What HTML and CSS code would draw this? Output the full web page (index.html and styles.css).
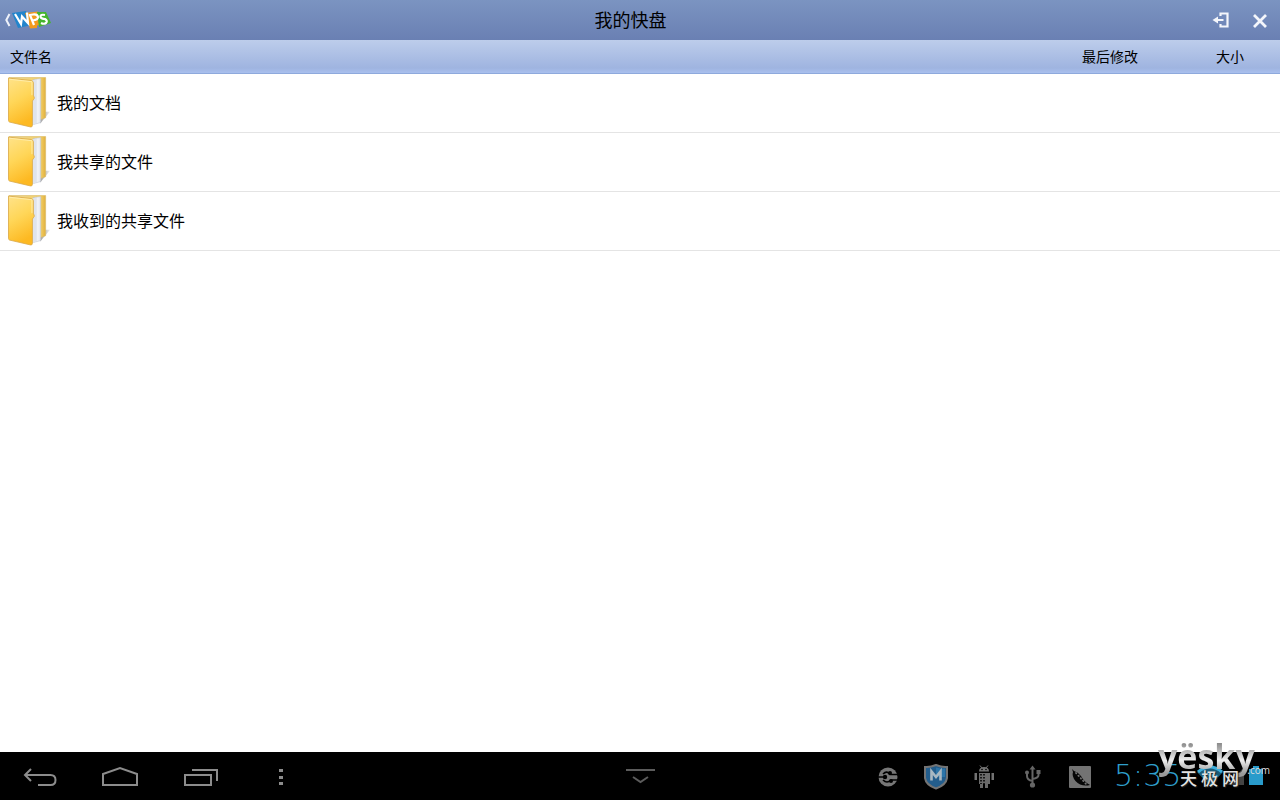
FILE: index.html
```html
<!DOCTYPE html>
<html lang="zh-CN">
<head>
<meta charset="utf-8">
<title>我的快盘</title>
<link rel="stylesheet" href="styles.css">
</head>
<body>
<svg class="defs" aria-hidden="true">
  <defs>
    <linearGradient id="front" x1="0" y1="0" x2="0.3" y2="1">
      <stop offset="0" stop-color="#ffe38a"/><stop offset="0.5" stop-color="#ffd658"/><stop offset="1" stop-color="#fdb922"/>
    </linearGradient>
    <linearGradient id="rear" x1="0" y1="0" x2="1" y2="0">
      <stop offset="0" stop-color="#ecd9a0"/><stop offset="0.85" stop-color="#f5d268"/><stop offset="1" stop-color="#e0b040"/>
    </linearGradient>
    <linearGradient id="paper" x1="0" y1="0" x2="1" y2="0">
      <stop offset="0" stop-color="#c9ced8"/><stop offset="0.6" stop-color="#f2f4f8"/><stop offset="1" stop-color="#dde2ea"/>
    </linearGradient>
    <linearGradient id="shade" x1="0" y1="0" x2="1" y2="0">
      <stop offset="0" stop-color="#999"/><stop offset="1" stop-color="#eee"/>
    </linearGradient>
    <symbol id="folder" viewBox="0 0 44 54">
      <path d="M33 48L43 36L37 36L32 44z" fill="url(#shade)"/>
      <path d="M1 1H38.500V42L33 44L1 44z" fill="url(#rear)" stroke="#dcbc68" stroke-width="0.7"/>
      <path d="M26 3L33.500 2V47L26 49z" fill="url(#paper)" stroke="#b9bec8" stroke-width="0.5"/>
      <path d="M24 4L29 3V48L24 50z" fill="#dfe4ec"/>
      <path d="M0.500 1.500L24 4Q26 4.500 26 6.500V19L27 22L25 25V49.500Q25 52 23 51.500L1.500 46.500Q0.500 46 0.500 45z" fill="url(#front)" stroke="#d9a848" stroke-width="0.8"/>
      <path d="M1.500 2.700L24.500 5.200V19" fill="none" stroke="#fff1b8" stroke-width="0.8"/>
    </symbol>
  </defs>
</svg>
<div class="screen">
  <header class="titlebar">
    <button class="back" type="button" aria-label="返回 WPS">
      <svg class="logo" viewBox="0 0 48 22" aria-hidden="true">
        <path d="M6.500 5L3.300 11L6.500 17" fill="none" stroke="#eef2fa" stroke-width="2"/>
        <path d="M9 4L23 2L29 16L15 19z" fill="#2385cc"/>
        <path d="M22 4L35 2.500L41 15L34 16.500L34 19L27 19.500z" fill="#f39a1c"/>
        <path d="M34 3L43 3L48 14L36 18z" fill="#45b52e"/>
        <path d="M12 5L18 15L19 7.500L25 14L24 3.500" fill="none" stroke="#fff" stroke-width="2.200"/>
        <path d="M31 16L27 6L30 5.500Q34.500 5 35 8Q35 11 29.500 11.500" fill="none" stroke="#fff" stroke-width="2.200"/>
        <path d="M42 6Q37 5 37.500 8Q38.500 10 42 10Q45 12 43 14Q41 15.500 38 14" fill="none" stroke="#fff" stroke-width="2.200"/>
      </svg>
    </button>
    <h1 class="title">我的快盘</h1>
    <button class="action" type="button" aria-label="退出登录">
      <svg viewBox="0 0 20 20" width="20" height="20" aria-hidden="true">
        <path d="M8.500 6V3.500H15.500V16.500H8.500V14" fill="none" stroke="#f4f6fb" stroke-width="2.200"/>
        <path d="M11.500 10H4" stroke="#f4f6fb" stroke-width="2"/><path d="M0.500 10L6 6.500V13.500z" fill="#f4f6fb"/>
      </svg>
    </button>
    <button class="action" type="button" aria-label="关闭">
      <svg viewBox="0 0 20 20" width="20" height="20" aria-hidden="true">
        <path d="M3 5L15 17M15 5L3 17" stroke="#f4f6fb" stroke-width="2.800"/>
      </svg>
    </button>
  </header>
  <main class="content">
    <table class="files">
      <thead>
        <tr><th class="name" scope="col">文件名</th><th class="modified" scope="col">最后修改</th><th class="size" scope="col">大小</th></tr>
      </thead>
      <tbody>
        <tr><td><div class="file"><svg class="folder" aria-hidden="true"><use href="#folder"/></svg><span>我的文档</span></div></td><td></td><td></td></tr>
        <tr><td><div class="file"><svg class="folder" aria-hidden="true"><use href="#folder"/></svg><span>我共享的文件</span></div></td><td></td><td></td></tr>
        <tr><td><div class="file"><svg class="folder" aria-hidden="true"><use href="#folder"/></svg><span>我收到的共享文件</span></div></td><td></td><td></td></tr>
      </tbody>
    </table>
  </main>
  <footer class="system">
    <nav class="keys">
      <button class="key" type="button" aria-label="返回">
        <svg viewBox="0 0 40 24" width="40" height="24" aria-hidden="true"><path d="M11 5L5 11L11 17M5 11H30.500Q35.500 11 35.500 16Q35.500 21 30.500 21H18" fill="none" stroke="#8c8c8c" stroke-width="2"/></svg>
      </button>
      <button class="key" type="button" aria-label="主屏幕">
        <svg viewBox="0 0 40 24" width="40" height="24" aria-hidden="true"><path d="M3 21V10L20 4L37 10V21z" fill="none" stroke="#8c8c8c" stroke-width="2"/></svg>
      </button>
      <button class="key" type="button" aria-label="最近任务">
        <svg viewBox="0 0 40 24" width="40" height="24" aria-hidden="true"><path d="M5 11H31V21H5zM12 6H37V17" fill="none" stroke="#8c8c8c" stroke-width="2"/></svg>
      </button>
      <button class="key" type="button" aria-label="菜单">
        <svg viewBox="0 0 40 24" width="40" height="24" aria-hidden="true"><path d="M19 5h4v3h-4zM19 12h4v3h-4zM19 18h4v3h-4z" fill="#8c8c8c"/></svg>
      </button>
    </nav>
    <button class="hide" type="button" aria-label="隐藏">
      <svg viewBox="0 0 40 24" width="40" height="24" aria-hidden="true"><path d="M6 6H35M13 13L20.500 18L28 13" fill="none" stroke="#5c5c5c" stroke-width="2"/></svg>
    </button>
    <div class="status">
      <svg class="notice" viewBox="0 0 28 28" aria-hidden="true">
        <circle cx="14" cy="15" r="9.500" fill="#777"/>
        <path d="M25 12.500H16Q13 8 9 12M25 18H17Q13 22 9 18" fill="none" stroke="#000" stroke-width="1.600"/>
        <circle cx="16" cy="11" r="2" fill="#000"/><circle cx="17" cy="19" r="2" fill="#000"/>
        <path d="M3 15H10" stroke="#000" stroke-width="1.500"/><circle cx="11" cy="15" r="2.200" fill="#000"/>
      </svg>
      <svg class="notice" viewBox="0 0 28 28" aria-hidden="true">
        <path d="M14 3Q20 5.500 25 5V16Q24 23 14 26.500Q4 23 3 16V5Q8 5.500 14 3z" fill="#235d8c" stroke="#747474" stroke-width="2"/>
        <path d="M14 5.500Q19 7 23 6.500V15H14z" fill="#2d75a8"/>
        <path d="M9.500 18.500V9.500L14 15L18.500 9.500V18.500" fill="none" stroke="#a9b8c2" stroke-width="2.600"/>
      </svg>
      <svg class="notice" viewBox="0 0 28 28" aria-hidden="true">
        <path d="M9 9.500Q9 5 14 5Q19 5 19 9.500z" fill="#727272"/><path d="M10 3.500L12 6M18 3.500L16 6" stroke="#727272"/>
        <circle cx="12" cy="7.500" r="0.800" fill="#000"/><circle cx="16" cy="7.500" r="0.800" fill="#000"/>
        <path d="M9 11H20V22H18V26H15V22H13V26H10V22H9z" fill="#6b6b6b"/>
        <path d="M4.500 11H7v7H4.500zM21.500 11H24v7h-2.500z" fill="#727272"/>
        <path d="M11 12V22M14 12V22" stroke="#111" stroke-width="1.800" stroke-dasharray="1.500 1.500"/>
      </svg>
      <svg class="notice" viewBox="0 0 28 28" aria-hidden="true">
        <path d="M14.500 23V6M14.500 19Q9 18 9 14V11M14.500 17Q20.500 16 20.500 13V10" fill="none" stroke="#666" stroke-width="2"/>
        <path d="M14.500 3.500L17.500 7.500H11.500z" fill="#666"/><circle cx="14.500" cy="23" r="2.600" fill="#666"/><circle cx="9" cy="10.500" r="2" fill="#666"/><path d="M18.500 8h4v4h-4z" fill="#666"/>
      </svg>
      <svg class="notice" viewBox="0 0 28 28" aria-hidden="true">
        <rect x="3" y="4" width="22" height="22" rx="1" fill="#737373"/>
        <path d="M6 7L8 9Q12 10 15 14Q18 20 24 23Q15 25 9.500 19Q5.500 14 7 10z" fill="#050505"/>
        <path d="M10 11L20 22" stroke="#737373" stroke-width="1.800" stroke-linecap="round" stroke-dasharray="0.500 3"/>
      </svg>
      <time class="clock" datetime="05:35">5:35</time>
      <svg class="wifi" viewBox="0 0 28 24" aria-hidden="true">
        <path d="M1 8Q14 -3 27 8L14 22z" fill="#1c5c78"/><path d="M2 8Q14 -2 26 8" fill="none" stroke="#3caedb" stroke-width="3"/><path d="M7 13Q14 7 21 13" fill="none" stroke="#3caedb" stroke-width="3"/>
      </svg>
      <svg class="signal" viewBox="0 0 16 20" aria-hidden="true"><path d="M0 19L16 1V19z" fill="#444"/></svg>
      <svg class="battery" viewBox="0 0 14 22" aria-hidden="true"><path d="M0 4H4V1H10V4H14V20H0z" fill="#299bcb"/></svg>
    </div>
    <div class="watermark">
      <div class="brand">yësky</div>
      <div class="caption"><span>天</span><span>极</span><span>网</span></div>
      <div class="domain">.com</div>
    </div>
  </footer>
</div>
</body>
</html>
```
FILE: styles.css
```css
* { box-sizing: border-box; }
body {
  margin: 0;
  background: #fff;
  color: #000;
  font-family: "Noto Sans CJK SC", "Noto Sans", sans-serif;
}
button { padding: 0; border: 0; background: none; cursor: pointer; }
svg { display: block; }
.defs { position: absolute; width: 0; height: 0; }
.screen { display: flex; flex-direction: column; min-height: 100vh; }
.titlebar {
  display: flex;
  align-items: center;
  height: 40px;
  background: linear-gradient(#7b94c1, #6a80b3);
}
.back { width: 59px; padding-left: 3px; }
.logo { width: 48px; height: 22px; }
.title { flex: 1; margin: 0; padding-bottom: 2px; font-size: 18px; font-weight: 400; line-height: 38px; text-align: center; }
.action { display: flex; justify-content: center; width: 39px; }
.content { flex: 1; }
.files { width: 100%; border-collapse: separate; border-spacing: 0; table-layout: fixed; }
.files th {
  height: 34px;
  padding: 0 0 2px;
  border-bottom: 1px solid #8ea9dc;
  background: linear-gradient(#bdcdeb, #9fb4e0 85%, #a9c0ee);
  font-size: 14px;
  font-weight: 400;
  line-height: 20px;
}
.files .name { padding-left: 10px; text-align: left; }
.modified { width: 140px; }
.size { width: 100px; }
.files td { height: 59px; padding: 0; border-bottom: 1px solid #e4e4e4; }
.file { display: flex; align-items: center; gap: 6px; padding-left: 8px; font-size: 16px; line-height: 24px; }
.file span { padding-bottom: 3px; }
.folder { width: 43px; height: 54px; }
.system {
  position: relative;
  display: flex;
  align-items: center;
  height: 48px;
  background: #000;
}
.keys { display: flex; flex: 1; }
.key { display: flex; justify-content: center; width: 80px; }
.status { display: flex; flex: 1; align-items: center; justify-content: flex-end; }
.notice { flex: none; width: 28px; height: 28px; margin-right: 20px; }
.clock {
  flex: none;
  width: 82px;
  color: #2f9fcc;
  font-family: "DejaVu Sans", sans-serif;
  font-size: 30px;
  font-weight: 200;
  line-height: 48px;
}
.wifi { flex: none; width: 28px; height: 24px; margin-right: 4px; }
.signal { flex: none; width: 16px; height: 20px; margin-right: 5px; }
.battery { flex: none; width: 14px; height: 22px; margin-right: 17px; }
.watermark { position: absolute; right: 10px; bottom: 10px; width: 112px; height: 56px; }
.brand {
  font-family: "Open Sans", sans-serif;
  font-size: 34px;
  font-weight: 700;
  line-height: 44px;
  color: transparent;
  background: linear-gradient(#888 20%, #eee 60%, #999 90%);
  -webkit-background-clip: text;
  background-clip: text;
}
.caption {
  position: absolute;
  bottom: 0;
  left: 22px;
  display: flex;
  gap: 4px;
  color: #e2e2e2;
  font-size: 17px;
  font-weight: 500;
  line-height: 24px;
  text-shadow: 1px 1px 1px #222;
}
.domain {
  position: absolute;
  right: 0;
  bottom: 14px;
  color: #ddd;
  font-family: "Open Sans", sans-serif;
  font-size: 10px;
  line-height: 12px;
}
```
